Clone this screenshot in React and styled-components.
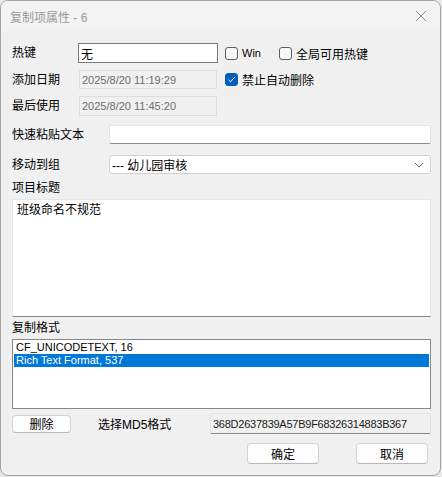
import React from 'react';
import styled, { createGlobalStyle } from 'styled-components';

const GlobalStyle = createGlobalStyle`
  html, body {
    margin: 0;
    padding: 0;
    background: #e9e9e9;
  }
  body {
    font-family: "Liberation Sans", "Noto Sans CJK SC", sans-serif;
    font-size: 12px;
    color: #000;
  }
`;

const Window = styled.div`
  width: 439px;
  height: 474px;
  border: 1px solid #a3a3a3;
  border-radius: 8px;
  background: #f0f0f0;
  overflow: hidden;
  display: flex;
  flex-direction: column;
`;

const TitleBar = styled.div`
  height: 30px;
  flex: none;
  display: flex;
  align-items: center;
  justify-content: space-between;
  padding: 0 8px 0 9px;
  background: #f3f3f3;
  color: #9b9b9b;
  font-size: 12px;
`;

const CloseIcon = () => (
  <svg width="12" height="12" viewBox="0 0 12 12" style={{ marginRight: 5 }}>
    <path d="M1 1 L11 11 M11 1 L1 11" stroke="#8a8a8a" strokeWidth="1" fill="none" />
  </svg>
);

const Body = styled.div`
  flex: 1;
  display: flex;
  flex-direction: column;
  padding: 12px 9px 0 11px;
`;

const TopGrid = styled.div`
  display: grid;
  grid-template-columns: 66px 140px 1fr;
  grid-template-rows: 20px 19px 20px;
  row-gap: 7px;
  align-items: center;
`;

const Label = styled.span`
  line-height: 16px;
  white-space: nowrap;
`;

const Edit = styled.div`
  height: 100%;
  box-sizing: border-box;
  display: flex;
  align-items: center;
  padding: 0 2px;
  background: ${p => (p.$readonly ? '#f0f0f0' : '#fff')};
  border: 1px solid ${p => (p.$readonly ? '#dedede' : '#7a7a7a')};
  color: ${p => (p.$readonly ? '#6d6d6d' : '#000')};
  font-size: ${p => (p.$small ? '11px' : '12px')};
  margin-left: ${p => (p.$readonly ? '1px' : '0')};
  width: ${p => (p.$readonly ? '138px' : 'auto')};
`;

const CheckRow = styled.div`
  display: flex;
  align-items: center;
  padding-left: 7px;
  gap: 18px;
`;

const Check = styled.label`
  display: flex;
  align-items: center;
  gap: 4px;
  font-size: ${p => (p.$small ? '11px' : '12px')};
  white-space: nowrap;
`;

const Box = styled.span`
  width: 13px;
  height: 13px;
  box-sizing: border-box;
  border-radius: 3px;
  border: 1px solid ${p => (p.$checked ? '#005fb8' : '#5d5d5d')};
  background: ${p => (p.$checked ? '#005fb8' : '#f7f7f7')};
  display: flex;
  align-items: center;
  justify-content: center;
`;

const Tick = () => (
  <svg width="9" height="9" viewBox="0 0 9 9">
    <path d="M1.5 4.8 L3.6 6.8 L7.6 2.2" stroke="#fff" strokeWidth="1" fill="none" />
  </svg>
);

const WideRow = styled.div`
  display: grid;
  grid-template-columns: 97px 1fr;
  align-items: center;
  height: ${p => p.$h || 19}px;
  margin-top: ${p => p.$mt}px;
`;

const FlatEdit = styled.div`
  height: 100%;
  box-sizing: border-box;
  background: #fff;
  border: 1px solid #e3e3e3;
  border-bottom-color: #8a8a8a;
  border-radius: 2px;
`;

const Select = styled.div`
  height: 100%;
  box-sizing: border-box;
  background: #fff;
  border: 1px solid #d0d0d0;
  border-radius: 3px;
  display: flex;
  align-items: center;
  justify-content: space-between;
  padding: 0 6px 0 2px;
`;

const Chevron = () => (
  <svg width="10" height="6" viewBox="0 0 10 6">
    <path d="M1 1 L5 5 L9 1" stroke="#606060" strokeWidth="1" fill="none" />
  </svg>
);

const SectionLabel = styled.div`
  margin-top: ${p => p.$mt}px;
  line-height: 16px;
`;

const TextArea = styled.div`
  margin-top: 3px;
  height: 118px;
  box-sizing: border-box;
  background: #fff;
  border: 1px solid #e6e6e6;
  border-bottom-color: #868686;
  padding: 2px 4px;
  line-height: 16px;
`;

const ListBox = styled.div`
  margin-top: 3px;
  height: 70px;
  box-sizing: border-box;
  background: #fff;
  border: 1px solid #828790;
  padding: 1px;
  font-size: 11px;
`;

const ListItem = styled.div`
  height: 13px;
  line-height: 13px;
  padding-left: 2px;
  background: ${p => (p.$selected ? '#0078d7' : 'transparent')};
  color: ${p => (p.$selected ? '#fff' : '#000')};
`;

const BottomRow = styled.div`
  margin-top: 4px;
  height: 21px;
  display: flex;
  align-items: center;
`;

const Button = styled.div`
  width: ${p => p.$w}px;
  height: ${p => p.$h}px;
  box-sizing: border-box;
  background: #fdfdfd;
  border: 1px solid #d3d3d3;
  border-bottom-color: #b8b8b8;
  border-radius: 4px;
  display: flex;
  align-items: center;
  justify-content: center;
`;

const Md5Label = styled.span`
  margin-left: 27px;
  width: 112px;
`;

const Md5Field = styled.div`
  flex: 1;
  height: 100%;
  box-sizing: border-box;
  background: #f0f0f0;
  border: 1px solid #e2e2e2;
  border-bottom-color: #8a8a8a;
  border-radius: 2px;
  padding: 0 2px;
  display: flex;
  align-items: center;
  font-size: 11px;
  letter-spacing: -0.25px;
  color: #1a1a1a;
`;

const Footer = styled.div`
  margin-top: 9px;
  display: flex;
  justify-content: flex-end;
  gap: 37px;
  padding-right: 3px;
`;

export default function App() {
  return (
    <>
      <GlobalStyle />
      <Window>
        <TitleBar>
          <span>复制项属性 - 6</span>
          <CloseIcon />
        </TitleBar>
        <Body>
          <TopGrid>
            <Label>热键</Label>
            <Edit>无</Edit>
            <CheckRow>
              <Check $small><Box />Win</Check>
              <Check><Box />全局可用热键</Check>
            </CheckRow>

            <Label>添加日期</Label>
            <Edit $readonly $small>2025/8/20 11:19:29</Edit>
            <CheckRow>
              <Check><Box $checked><Tick /></Box>禁止自动删除</Check>
            </CheckRow>

            <Label>最后使用</Label>
            <Edit $readonly $small>2025/8/20 11:45:20</Edit>
            <span />
          </TopGrid>

          <WideRow $mt={9}>
            <Label>快速粘贴文本</Label>
            <FlatEdit />
          </WideRow>

          <WideRow $mt={11}>
            <Label>移动到组</Label>
            <Select>
              <span>--- 幼儿园审核</span>
              <Chevron />
            </Select>
          </WideRow>

          <SectionLabel $mt={6}>项目标题</SectionLabel>
          <TextArea>班级命名不规范</TextArea>

          <SectionLabel $mt={3}>复制格式</SectionLabel>
          <ListBox>
            <ListItem>CF_UNICODETEXT, 16</ListItem>
            <ListItem $selected>Rich Text Format, 537</ListItem>
          </ListBox>

          <BottomRow>
            <Button $w={59} $h={18}>删除</Button>
            <Md5Label>选择MD5格式</Md5Label>
            <Md5Field>368D2637839A57B9F68326314883B367</Md5Field>
          </BottomRow>

          <Footer>
            <Button $w={72} $h={21}>确定</Button>
            <Button $w={72} $h={21}>取消</Button>
          </Footer>
        </Body>
      </Window>
    </>
  );
}
